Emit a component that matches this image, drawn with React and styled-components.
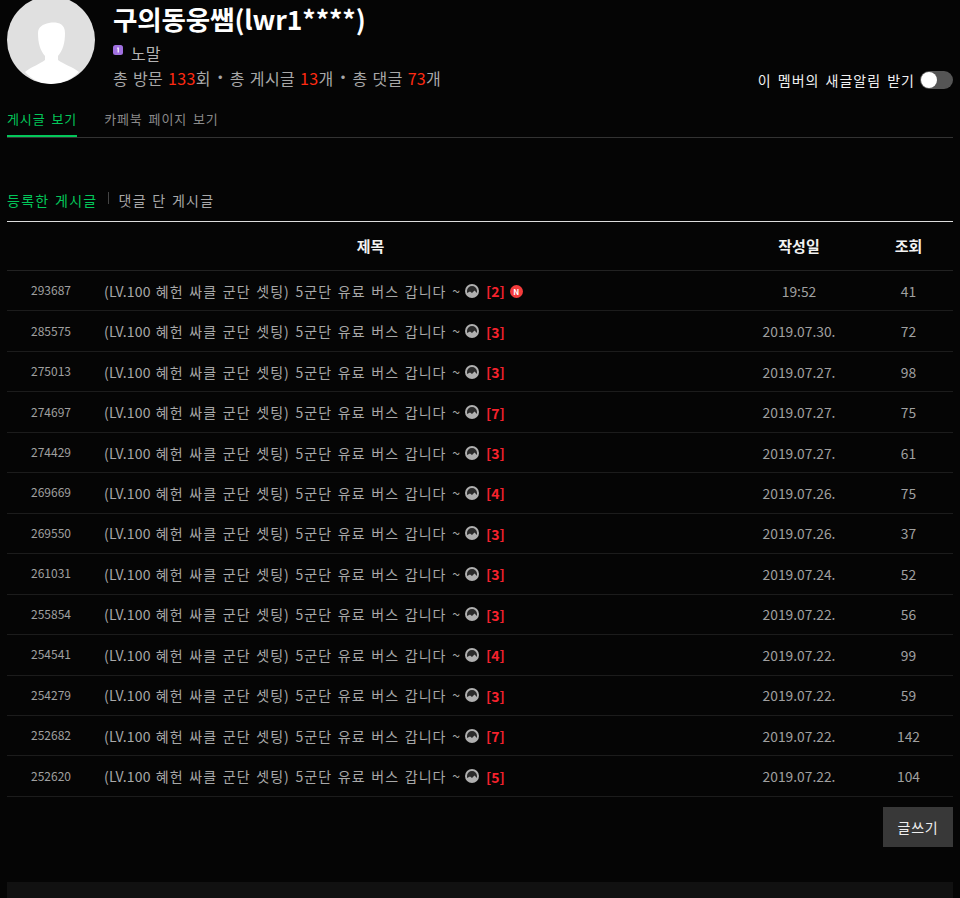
import styled, { createGlobalStyle } from "styled-components";

const GlobalStyle = createGlobalStyle`
  html, body {
    margin: 0;
    padding: 0;
    background: #050505;
    overflow: hidden;
  }
  body {
    font-family: "Noto Sans CJK KR", "Noto Sans", sans-serif;
  }
`;

const Page = styled.div`
  width: 960px;
  height: 898px;
  overflow: hidden;
  padding: 0 7px;
  box-sizing: border-box;
  background: #050505;
`;

const Profile = styled.div`
  display: flex;
  margin-top: -4px;
  height: 111px;
  position: relative;
`;

const Avatar = styled.div`
  width: 88px;
  height: 88px;
  flex: none;
  border-radius: 50%;
  overflow: hidden;
  background: #e0e0e0;
  svg {
    display: block;
  }
`;

const Info = styled.div`
  margin-left: 18px;
  flex: 1;
  display: flex;
  flex-direction: column;
`;

const Name = styled.div`
  color: #fff;
  font-size: 26.5px;
  font-weight: 700;
  line-height: 36px;
  margin-top: 5px;
  letter-spacing: -0.1px;
`;

const Level = styled.div`
  display: flex;
  align-items: center;
  gap: 8px;
  color: #b4b4b4;
  font-size: 16px;
  line-height: 24px;
  margin-top: 4px;
  svg {
    margin-top: -6px;
  }
`;

const Stats = styled.div`
  color: #a8a8a8;
  font-size: 16px;
  line-height: 24px;
  margin-top: 1px;
  letter-spacing: 0.35px;
  word-spacing: 1px;
  em {
    color: #ff2a12;
    font-style: normal;
  }
`;

const Dot = styled.span`
  display: inline-block;
  width: 19px;
  letter-spacing: 0;
  text-align: center;
  transform: translateY(-2px);
`;

const Notify = styled.div`
  position: absolute;
  right: 0;
  top: 74px;
  display: flex;
  align-items: center;
  gap: 5px;
  color: #f0f0f0;
  font-size: 14px;
  line-height: 20px;
  letter-spacing: 1px;
  word-spacing: 2px;
`;

const Toggle = styled.div`
  width: 33px;
  height: 18px;
  border-radius: 9px;
  background: #555;
  position: relative;
  &::before {
    content: "";
    position: absolute;
    left: 1px;
    top: 1px;
    width: 16px;
    height: 16px;
    border-radius: 50%;
    background: #fff;
  }
`;

const Tabs = styled.div`
  display: flex;
  gap: 27px;
  height: 30px;
  border-bottom: 1px solid #333;
`;

const Tab = styled.div`
  font-size: 13px;
  line-height: 24px;
  height: 30px;
  box-sizing: border-box;
  letter-spacing: 0.9px;
  word-spacing: 2px;
  color: ${(p) => (p.$active ? "#03c75a" : "#8a8a8a")};
  border-bottom: ${(p) => (p.$active ? "2px solid #03c75a" : "none")};
`;

const SubTabs = styled.div`
  display: flex;
  align-items: flex-start;
  margin-top: 50px;
  height: 33px;
  border-bottom: 1px solid #ddd;
`;

const SubTab = styled.div`
  font-size: 14px;
  line-height: 24px;
  letter-spacing: 1.3px;
  word-spacing: 1px;
  color: ${(p) => (p.$active ? "#03c75a" : "#a8a8a8")};
`;

const SubDivider = styled.span`
  width: 1px;
  height: 12px;
  background: #444;
  margin: 4px 10px 0;
`;

const Table = styled.div`
  display: flex;
  flex-direction: column;
`;

const HeadRow = styled.div`
  display: grid;
  grid-template-columns: 727px 130px 89px;
  padding-bottom: 2px;
  height: 46px;
  align-items: center;
  border-bottom: 1px solid #222;
  color: #f2f2f2;
  font-size: 15px;
  font-weight: 700;
  text-align: center;
`;

const Row = styled.div`
  display: grid;
  grid-template-columns: 88px 639px 130px 89px;
  height: 40.46px;
  box-sizing: border-box;
  align-items: center;
  border-bottom: 1px solid #1c1c1c;
  font-size: 13.8px;
  color: #a6a6a6;
`;

const Num = styled.div`
  font-size: 12px;
  text-align: center;
  margin-top: -2px;
  color: #a0a0a0;
`;

const TitleCell = styled.div`
  margin-left: 9px;
  display: flex;
  align-items: center;
  white-space: nowrap;
  color: #a8a8a8;
  font-size: 14px;
  letter-spacing: 1px;
  word-spacing: 1.6px;
`;

const Level100 = styled.span`
  letter-spacing: 0.2px;
  margin-right: 5px;
`;

const Comment = styled.span`
  color: #f5222d;
  font-weight: 700;
  font-size: 14px;
  letter-spacing: 0;
  margin: 1px 0 0 7px;
`;

const NewBadge = styled.span`
  width: 13px;
  height: 13px;
  border-radius: 50%;
  background: #f53c3c;
  color: #fff;
  font-size: 8px;
  font-weight: 700;
  letter-spacing: 0;
  line-height: 13px;
  text-align: center;
  margin: 2px 0 0 5px;
`;

const Cell = styled.div`
  text-align: center;
  color: #a0a0a0;
`;

const Photo = styled.svg`
  margin-left: 4px;
  flex: none;
`;

const Actions = styled.div`
  display: flex;
  justify-content: flex-end;
  margin-top: 10px;
`;

const WriteButton = styled.div`
  width: 70px;
  height: 40px;
  background: #383838;
  color: #eee;
  font-size: 14px;
  letter-spacing: 0.8px;
  line-height: 40px;
  text-align: center;
`;

const Footer = styled.div`
  margin-top: 35px;
  height: 40px;
  background: #111;
`;

const rows = [
  ["293687", 2, "19:52", 41, true],
  ["285575", 3, "2019.07.30.", 72],
  ["275013", 3, "2019.07.27.", 98],
  ["274697", 7, "2019.07.27.", 75],
  ["274429", 3, "2019.07.27.", 61],
  ["269669", 4, "2019.07.26.", 75],
  ["269550", 3, "2019.07.26.", 37],
  ["261031", 3, "2019.07.24.", 52],
  ["255854", 3, "2019.07.22.", 56],
  ["254541", 4, "2019.07.22.", 99],
  ["254279", 3, "2019.07.22.", 59],
  ["252682", 7, "2019.07.22.", 142],
  ["252620", 5, "2019.07.22.", 104],
];

function PhotoIcon() {
  return (
    <Photo width="14" height="14" viewBox="0 0 14 14">
      <circle cx="7" cy="7" r="7" fill="#b0b0b0" />
      <path d="M2 7 A5 5 0 0 1 12 7 L12 9 L9.5 6.5 L7 9 L5 7.5 L2 9Z" fill="#2a2a2a" />
    </Photo>
  );
}

export default function App() {
  return (
    <Page>
      <GlobalStyle />
      <Profile>
        <Avatar>
          <svg width="88" height="88" viewBox="0 0 88 88">
            <path
              d="M42 27 C48 26 58 26 58 37 C58 47 56 54 51 60 L51 64 C56 68 66 71 72 76 C64 84 54 88 44 88 C34 88 25 84 18 76 C24 71 33 68 38 64 L38 60 C33 54 31 47 31 37 C31 31 36 28 42 27Z"
              fill="#fff"
            />
          </svg>
        </Avatar>
        <Info>
          <Name>구의동웅쌤(lwr1****)</Name>
          <Level>
            <svg width="10" height="10" viewBox="0 0 10 10">
              <rect width="10" height="10" rx="2.5" fill="#a070e0" />
              <path d="M4.2 2.6 H5.8 V7.4 H4.6 V3.7 H4.2Z" fill="#fff" />
            </svg>
            노말
          </Level>
          <Stats>
            총 방문 <em>133</em>회<Dot>・</Dot>총 게시글 <em>13</em>개<Dot>・</Dot>총 댓글 <em>73</em>개
          </Stats>
        </Info>
        <Notify>
          이 멤버의 새글알림 받기
          <Toggle />
        </Notify>
      </Profile>
      <Tabs>
        <Tab $active>게시글 보기</Tab>
        <Tab>카페북 페이지 보기</Tab>
      </Tabs>
      <SubTabs>
        <SubTab $active>등록한 게시글</SubTab>
        <SubDivider />
        <SubTab>댓글 단 게시글</SubTab>
      </SubTabs>
      <Table>
        <HeadRow>
          <div>제목</div>
          <div>작성일</div>
          <div>조회</div>
        </HeadRow>
        {rows.map(([id, comments, date, views, isNew]) => (
          <Row key={id}>
            <Num>{id}</Num>
            <TitleCell>
              <Level100>(LV.100</Level100>
              혜헌 싸클 군단 셋팅) 5군단 유료 버스 갑니다 ~
              <PhotoIcon />
              <Comment>[{comments}]</Comment>
              {isNew && <NewBadge>N</NewBadge>}
            </TitleCell>
            <Cell>{date}</Cell>
            <Cell>{views}</Cell>
          </Row>
        ))}
      </Table>
      <Actions>
        <WriteButton>글쓰기</WriteButton>
      </Actions>
      <Footer />
    </Page>
  );
}
